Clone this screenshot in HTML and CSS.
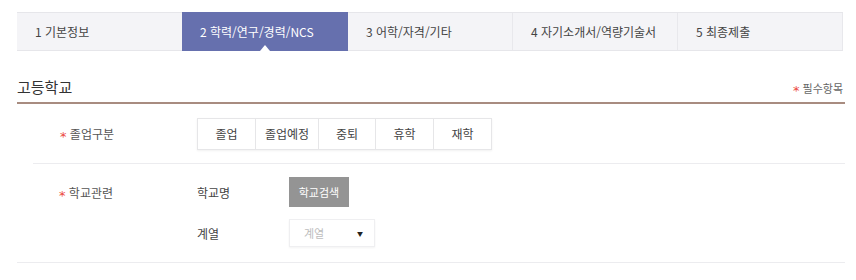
FILE: index.html
```html
<!DOCTYPE html>
<html lang="ko">
<head>
<meta charset="utf-8">
<link rel="stylesheet" href="styles.css">
</head>
<body>
<div class="page">
  <nav class="steps">
    <div class="step">1 기본정보</div>
    <div class="step active">2 학력/연구/경력/NCS</div>
    <div class="step">3 어학/자격/기타</div>
    <div class="step">4 자기소개서/역량기술서</div>
    <div class="step">5 최종제출</div>
  </nav>

  <div class="section-head">
    <h2 class="section-title">고등학교</h2>
    <span class="required-note"><span class="star">*</span> 필수항목</span>
  </div>

  <div class="row row-grad">
    <div class="label"><span class="star">*</span> 졸업구분</div>
    <div class="seg">
      <button class="seg-btn">졸업</button>
      <button class="seg-btn">졸업예정</button>
      <button class="seg-btn">중퇴</button>
      <button class="seg-btn">휴학</button>
      <button class="seg-btn">재학</button>
    </div>
  </div>

  <div class="row row-school">
    <div class="label"><span class="star">*</span> 학교관련</div>
    <div class="fields">
      <div class="sub-label">학교명</div>
      <div><button class="search-btn">학교검색</button></div>
      <div class="sub-label">계열</div>
      <div class="select"><span class="placeholder">계열</span><span class="caret">▼</span></div>
    </div>
  </div>
</div>
</body>
</html>
```

FILE: styles.css
```css
* { box-sizing: border-box; }
html, body { margin: 0; padding: 0; background: #fff; }
body {
  font-family: "Noto Sans CJK KR", "Noto Sans", sans-serif;
  font-size: 12px;
  color: #444;
}
.page {
  width: 856px;
  padding: 12px 11px 0 17px;
}
.steps {
  display: flex;
  height: 39px;
  background: #f4f4f7;
  border-top: 1px solid #e6e6ea;
  border-bottom: 1px solid #e6e6ea;
  width: 826px;
}
.step {
  position: relative;
  width: 165px;
  display: flex;
  align-items: center;
  padding-left: 18px;
  color: #444;
  border-right: 1px solid #e8e8ec;
  font-size: 12px;
}
.step:nth-child(1), .step:nth-child(2) { border-right: none; }
.step.active {
  background: #6670ae;
  color: #fff;
  margin-top: -1px;
  margin-bottom: -1px;
  width: 166px;
}
.step.active::after {
  content: "";
  position: absolute;
  left: 78px;
  bottom: 0;
  border-left: 5px solid transparent;
  border-right: 5px solid transparent;
  border-bottom: 6px solid #fff;
}
.section-head {
  display: flex;
  justify-content: space-between;
  align-items: flex-end;
  margin-top: 26px;
  width: 828px;
  padding-bottom: 5px;
  border-bottom: 2px solid #a88c80;
}
.section-title {
  margin: 0;
  font-size: 15px;
  font-weight: 400;
  color: #333;
  line-height: 20px;
}
.required-note {
  font-size: 11px;
  color: #666;
  line-height: 14px;
  margin-bottom: 2px;
  margin-right: 2px;
}
.star {
  color: #ec4a3e;
  font-family: "DejaVu Sans", sans-serif;
  font-size: 13px;
  line-height: 0;
  position: relative;
  top: 2px;
}
.row {
  display: flex;
  border-bottom: 1px solid #ececef;
}
.label {
  color: #555;
  font-size: 12px;
}
.row-grad {
  margin-left: 16px;
  width: 812px;
  height: 60px;
  align-items: center;
}
.row-grad .label { width: 164px; padding-left: 27px; }
.seg {
  display: flex;
  border: 1px solid #e6e6e8;
  box-shadow: 0 1px 2px rgba(0,0,0,0.06);
}
.seg-btn {
  font-family: inherit;
  font-size: 12px;
  color: #444;
  background: #fff;
  border: none;
  border-right: 1px solid #e6e6e8;
  height: 30px;
  width: 58px;
  padding: 0;
}
.seg-btn:nth-child(2) { width: 63px; }
.seg-btn:nth-child(3) { width: 57px; }
.seg-btn:last-child { border-right: none; width: 57px; }
.row-school {
  width: 828px;
  padding: 13px 0 15px;
}
.row-school .label { width: 180px; padding-left: 42px; padding-top: 7px; }
.fields {
  display: grid;
  grid-template-columns: 92px auto;
  row-gap: 12px;
  align-items: center;
}
.sub-label { color: #444; font-size: 12px; }
.search-btn {
  font-family: inherit;
  font-size: 11px;
  color: #fff;
  background: #949494;
  border: none;
  width: 60px;
  height: 30px;
  padding: 0;
  display: block;
}
.select {
  width: 86px;
  height: 28px;
  border: 1px solid #efeff1;
  box-shadow: 0 1px 2px rgba(0,0,0,0.05);
  display: flex;
  align-items: center;
  justify-content: space-between;
  padding: 0 11px 0 14px;
}
.placeholder { color: #bdbdbd; font-size: 11px; }
.caret { font-size: 6px; color: #222; }
```
